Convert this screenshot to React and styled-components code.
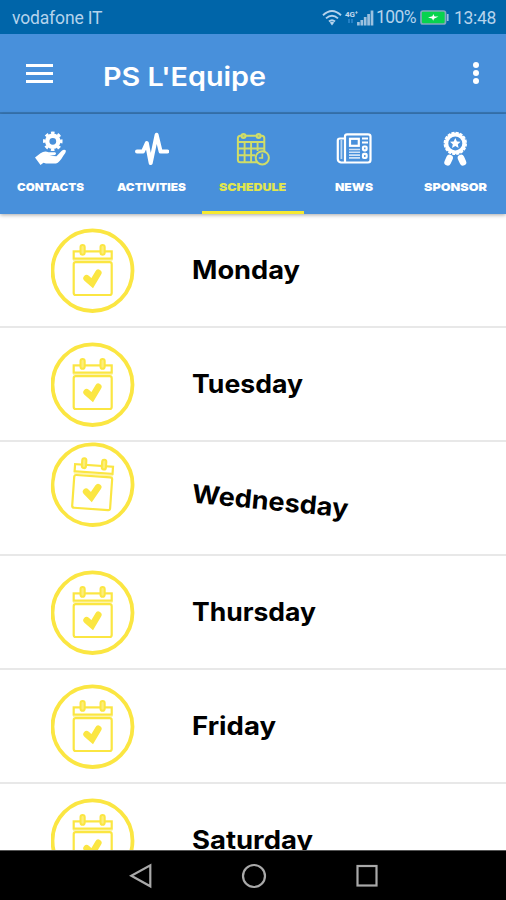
import React from "react";
import styled, { createGlobalStyle, css } from "styled-components";

const GlobalStyle = createGlobalStyle`
  * {
    box-sizing: border-box;
  }
  body {
    margin: 0;
    font-family: Inter, "Open Sans", sans-serif;
  }
`

const days = [
  { name: "Monday", width: 108 },
  { name: "Tuesday", width: 111 },
  { name: "Wednesday", width: 157, tilted: true },
  { name: "Thursday", width: 124 },
  { name: "Friday", width: 84 },
  { name: "Saturday", width: 121 },
];

const tabs = [
  { name: "CONTACTS", width: 67, icon: ContactsIcon },
  { name: "ACTIVITIES", width: 69, icon: ActivitiesIcon },
  { name: "SCHEDULE", width: 67, icon: ScheduleIcon, active: true },
  { name: "NEWS", width: 38, icon: NewsIcon },
  { name: "SPONSOR", width: 63, icon: SponsorIcon },
];

// label stretched to a fixed width, the display face is wider than Inter
function WideText({ width, size, weight, children }) {
  return (
    <WideSvg width={width} height={size * 1.4} fontSize={size} fontWeight={weight}>
      <text x="0" y={size} textLength={width} lengthAdjust="spacingAndGlyphs">
        {children}
      </text>
    </WideSvg>
  );
}

function ContactsIcon() {
  return (
    <svg width="34" height="36" viewBox="0 0 34 36">
      <g fill="none" stroke="#fff">
        <circle cx="18.8" cy="10.3" r="5.6" strokeWidth="4.4" />
        <circle cx="18.8" cy="10.3" r="8.5" strokeWidth="2.6" strokeDasharray="3.5 3.176" transform="rotate(-102 18.8 10.3)" />
      </g>
      <path
        fill="#fff"
        d="M1 26.5 L6.5 22.2 Q10.5 19.5 14.5 21.2 L21 21.3 Q23 22.5 21 24 L15.5 24.8 L22.5 25.2 L27.5 19.9 Q30.5 17.6 32 19.8 Q32 21.5 29.5 24.5 Q25.5 31.5 22 32.5 L12 32.5 L9.5 31.7 L6.5 34 Z"
      />
    </svg>
  );
}

function ActivitiesIcon() {
  return (
    <svg width="34" height="36" viewBox="0 0 34 36">
      <path
        d="M2 20.5 H8 L11.8 12 L15.7 32 L21.6 3.8 L25.6 20.5 H32.3"
        fill="none"
        stroke="#fff"
        strokeWidth="4"
        strokeLinecap="round"
        strokeLinejoin="round"
      />
    </svg>
  );
}

function ScheduleIcon() {
  return (
    <svg width="34" height="36" viewBox="0 0 34 36">
      <g fill="none" stroke="#d0dd68" strokeWidth="2">
        <rect x="1.9" y="4.8" width="26.4" height="26.4" rx="2.5" />
        <path d="M2 11 H28 M2 17.5 H28 M2 24.2 H19 M8.6 11 V31 M15.1 11 V31 M21.6 11 V20" strokeWidth="1.9" />
        <circle cx="7.5" cy="5" r="2" fill="#9fbf90" />
        <circle cx="22.6" cy="5" r="2" fill="#9fbf90" />
        <circle cx="26.3" cy="26.8" r="6.6" fill="#4890db" />
        <path d="M26.3 22.5 V27 H22.8" strokeWidth="1.7" />
      </g>
    </svg>
  );
}

function NewsIcon() {
  return (
    <svg width="36" height="36" viewBox="0 0 36 36">
      <g fill="none" stroke="#fff" strokeWidth="2.2">
        <path d="M9 30.8 V5.3 Q9 3.3 11 3.3 H32 Q34.5 3.3 34.5 5.5 V29 Q34.5 31.5 32 31.5 H5 Q1.8 31 1.8 28 V9.5 Q1.8 7.5 4 7.5 H8" />
        <path d="M5.4 9 V28" stroke="#b9d6f4" strokeWidth="1.8" />
        <rect x="14" y="7.8" width="8.8" height="7" />
        <path d="M26 7.5 H32 M26 11.5 H32" strokeWidth="2" />
        <path d="M13 18.5 H24 M13 21.3 H24 M13 24.1 H24 M13 26.9 H24" strokeWidth="1.6" stroke="#cfe2f7" />
        <rect x="27" y="15.5" width="3.6" height="3.8" rx="1" />
        <rect x="27" y="22.8" width="3.6" height="4.2" rx="1" />
      </g>
    </svg>
  );
}

function SponsorIcon() {
  return (
    <svg width="34" height="36" viewBox="0 0 34 36">
      <g fill="none" stroke="#fff">
        <circle cx="17.3" cy="12.4" r="8.8" strokeWidth="3.6" />
        <circle cx="17.3" cy="12.4" r="10.7" strokeWidth="2" strokeDasharray="3.1 1.1" />
        <path d="M11.6 27 L9.6 31.3 M23 27 L25 31.3" strokeWidth="6.6" strokeLinecap="round" />
      </g>
      <path fill="#fff" d="M17.3 6.9 L18.9 10.4 L22.6 10.8 L19.8 13.3 L20.6 17 L17.3 15.1 L14 17 L14.8 13.3 L12 10.8 L15.7 10.4 Z" />
    </svg>
  );
}

function CalendarIcon() {
  return (
    <svg width="84" height="86" viewBox="0 0 84 86">
      <g fill="none" stroke="#fbe642">
        <ellipse cx="41.5" cy="42.7" rx="40" ry="40.3" strokeWidth="3.8" />
        <rect x="22.7" y="23.4" width="38" height="7.2" strokeWidth="2.2" />
        <rect x="22.7" y="34.2" width="38" height="32.8" rx="2" strokeWidth="2.2" />
        <path d="M22 32.3 H61.5" strokeWidth="1.4" opacity="0.45" />
      </g>
      <g fill="#fcee7c" stroke="#fbe642" strokeWidth="2">
        <rect x="29.5" y="17" width="4.2" height="9.8" rx="2.1" />
        <rect x="49.5" y="17" width="4.2" height="9.8" rx="2.1" />
      </g>
      <path
        d="M35.6 50.2 L41.2 55.2 L47.3 44.8"
        fill="none"
        stroke="#fbe642"
        strokeWidth="6.6"
        strokeLinecap="round"
        strokeLinejoin="miter"
      />
    </svg>
  );
}

function StatusIcons() {
  return (
    <svg width="54" height="18" viewBox="0 0 54 18">
      <g fill="none" stroke="#b5d3ec" strokeWidth="1.9">
        <path d="M1 6.2 Q10 -2.2 19 6.2 M4 9.4 Q10 3.9 16 9.4 M7 12.5 Q10 9.8 13 12.5" />
      </g>
      <path d="M7.8 13.4 Q10 12 12.2 13.4 L10 16.6 Z" fill="#b5d3ec" />
      <text x="23" y="7.5" fontSize="8" fontWeight="700" fill="#c4daef" textLength="13">4G⁺</text>
      <path d="M27 10 V14 M30 10 V14" stroke="#2480c6" strokeWidth="2" />
      <path d="M36.4 16.5 V13 M39.8 16.5 V11 M43.2 16.5 V8 M46.6 16.5 V5 M50 16.5 V1.5" stroke="#9cc1df" strokeWidth="2.7" />
    </svg>
  );
}

function BatteryIcon() {
  return (
    <svg width="29" height="16" viewBox="0 0 29 16">
      <rect x="1" y="1" width="24.5" height="13" rx="2" fill="#08d34e" stroke="#83a9bd" strokeWidth="1.7" />
      <path d="M27.7 4 V11" stroke="#9cc1df" strokeWidth="1.8" />
      <path d="M8 7.5 L12.5 6.2 L13.2 4.1 L14.6 6.5 H18.5 L14 8.7 L13.2 10.8 L12 8.5 Z" fill="#fff" />
    </svg>
  );
}

function App() {
  return (
    <Screen>
      <GlobalStyle />
      <StatusBar>
        <Carrier>vodafone IT</Carrier>
        <StatusIcons />
        <Percent>100%</Percent>
        <BatteryIcon />
        <Clock>13:48</Clock>
      </StatusBar>

      <AppBar>
        <MenuButton aria-label="Menu">
          <span />
          <span />
          <span />
        </MenuButton>
        <Title>
          <WideText width={163} size={26} weight={600}>PS L'Equipe</WideText>
        </Title>
        <MoreButton aria-label="More">
          <span />
          <span />
          <span />
        </MoreButton>
      </AppBar>

      <TabBar>
        {tabs.map(({ name, width, icon: Icon, active }) => (
          <Tab key={name} $active={active}>
            <Icon />
            <WideText width={width} size={11} weight={900}>{name}</WideText>
          </Tab>
        ))}
      </TabBar>

      <DayList>
        {days.map((day) => (
          <DayRow key={day.name}>
            <DayIcon $tilted={day.tilted}>
              <CalendarIcon />
            </DayIcon>
            <DayName $tilted={day.tilted}>
              <WideText width={day.width} size={25.5} weight={750}>{day.name}</WideText>
            </DayName>
          </DayRow>
        ))}
      </DayList>

      <NavBar>
        <svg width="24" height="26" viewBox="0 0 24 26">
          <path d="M21.3 2.3 V23.3 L2.3 12.8 Z" />
        </svg>
        <svg width="26" height="26" viewBox="0 0 26 26">
          <circle cx="13" cy="13" r="11" />
        </svg>
        <svg width="24" height="26" viewBox="0 0 24 26">
          <rect x="2.5" y="3" width="19" height="19.5" />
        </svg>
      </NavBar>
    </Screen>
  );
}

const Screen = styled.div`
  display: flex;
  flex-direction: column;
  width: 506px;
  height: 900px;
  overflow: hidden;
  background: #fff;
`

const WideSvg = styled.svg`
  display: block;
  overflow: visible;
  fill: currentColor;
`

const StatusBar = styled.div`
  display: flex;
  align-items: center;
  flex: 0 0 34px;
  padding: 1px 10px 0 12px;
  background: #0065a9;
  color: #b5d3ec;
  font-family: Roboto, sans-serif;
  font-size: 17.5px;
`

const Carrier = styled.span`
  flex: 1;
  padding-top: 1px;
  letter-spacing: -0.15px;
`
const Percent = styled.span`
  width: 44px;
  margin-top: -1px;
  letter-spacing: -0.6px;
`
const Clock = styled.span`
  width: 42px;
  margin-left: 5px;
  padding-top: 1px;
  letter-spacing: -0.3px;
  text-align: right;
  white-space: nowrap;
`

const AppBar = styled.header`
  display: flex;
  align-items: center;
  flex: 0 0 80px;
  padding: 0 25px 0 26px;
  background: #4890db;
  border-bottom: 2px solid #3877b5;
  color: #fff;
`

const MenuButton = styled.div`
  display: flex;
  flex-direction: column;
  gap: 5px;
  width: 27px;
  span {
    height: 3px;
    background: #fff;
  }
`
const Title = styled.h1`
  flex: 1;
  margin: 10px 0 0 50px;
`
const MoreButton = styled.div`
  display: flex;
  flex-direction: column;
  gap: 2px;
  margin-right: 2px;
  span {
    width: 6px;
    height: 6px;
    border-radius: 50%;
    background: #fff;
  }
`

const TabBar = styled.nav`
  display: grid;
  grid-template-columns: repeat(5, 1fr);
  flex: 0 0 100px;
  z-index: 1;
  background: #4890db;
  box-shadow: 0 1px 4px rgba(0, 0, 0, 0.35);
`
const Tab = styled.div`
  display: flex;
  flex-direction: column;
  align-items: center;
  gap: 13px;
  padding-top: 17px;
  color: ${(props) => (props.$active ? "#e0e64e" : "#fff")};
  border-bottom: 3px solid ${(props) => (props.$active ? "#f5e932" : "transparent")};
`

const DayList = styled.main`
  flex: 1;
  min-height: 0;
  overflow: hidden;
`
const DayRow = styled.div`
  display: flex;
  align-items: center;
  height: 114px;
  padding: 2px 0 0 51px;
  border-bottom: 2px solid #e8e8e8;
`
const DayIcon = styled.div`
  display: flex;
  width: 141px;
  ${(props) => props.$tilted && css`
    transform: translateY(-14px) rotate(4deg);
    transform-origin: 42px 43px;
  `}
`
const DayName = styled.div`
  color: #000;
  ${(props) => props.$tilted && css`
    transform: translateY(-4px) rotate(5.5deg);
    transform-origin: 0 50%;
  `}
`

const NavBar = styled.footer`
  display: flex;
  justify-content: center;
  align-items: center;
  gap: 88px;
  flex: 0 0 50px;
  padding-left: 1px;
  background: #000;
  border-top: 1px solid #555;
  svg {
    fill: none;
    stroke: #a9a9a9;
    stroke-width: 2.2;
  }
`

export default App;
